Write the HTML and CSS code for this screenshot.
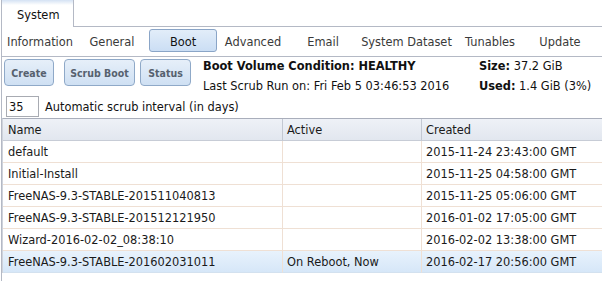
FILE: index.html
```html
<!DOCTYPE html>
<html lang="en">
  <head>
    <meta charset="UTF-8" />
    <meta name="viewport" content="width=device-width, initial-scale=1.0" />
    <title>System - Boot</title>
    <link rel="stylesheet" href="styles.css">
  </head>
  <body>
    <div class="page">
      <!-- Top tab -->
      <div class="tabbar">
        <div class="tab">System</div>
      </div>

      <!-- Sub navigation -->
      <div class="subnav">
        <a href="#" class="nav-item nav-first">Information</a>
        <a href="#" class="nav-item nav-first">General</a>
        <a href="#" class="nav-item active">Boot</a>
        <a href="#" class="nav-item">Advanced</a>
        <a href="#" class="nav-item">Email</a>
        <a href="#" class="nav-item nav-wide">System Dataset</a>
        <a href="#" class="nav-item">Tunables</a>
        <a href="#" class="nav-item">Update</a>
      </div>

      <!-- Boot panel -->
      <div class="content">
        <div class="toolbar">
          <div class="actions">
            <button class="btn btn-create">Create</button>
            <button class="btn btn-scrub">Scrub Boot</button>
            <button class="btn btn-status">Status</button>
          </div>
          <div class="status">
            <div class="status-main">
              <div><b>Boot Volume Condition: HEALTHY</b></div>
              <div>Last Scrub Run on: Fri Feb 5 03:46:53 2016</div>
            </div>
            <div class="status-size">
              <div><b>Size:</b> 37.2 GiB</div>
              <div><b>Used:</b> 1.4 GiB (3%)</div>
            </div>
          </div>
        </div>

        <div class="interval">
          <input class="interval-input" type="text" value="35">
          <label class="interval-label">Automatic scrub interval (in days)</label>
        </div>

        <table class="grid">
          <thead>
            <tr>
              <th class="col-name">Name</th>
              <th class="col-active">Active</th>
              <th class="col-created">Created</th>
            </tr>
          </thead>
          <tbody>
            <tr>
              <td>default</td>
              <td></td>
              <td>2015-11-24 23:43:00 GMT</td>
            </tr>
            <tr>
              <td>Initial-Install</td>
              <td></td>
              <td>2015-11-25 04:58:00 GMT</td>
            </tr>
            <tr>
              <td>FreeNAS-9.3-STABLE-201511040813</td>
              <td></td>
              <td>2015-11-25 05:06:00 GMT</td>
            </tr>
            <tr>
              <td>FreeNAS-9.3-STABLE-201512121950</td>
              <td></td>
              <td>2016-01-02 17:05:00 GMT</td>
            </tr>
            <tr>
              <td>Wizard-2016-02-02_08:38:10</td>
              <td></td>
              <td>2016-02-02 13:38:00 GMT</td>
            </tr>
            <tr class="selected">
              <td>FreeNAS-9.3-STABLE-201602031011</td>
              <td>On Reboot, Now</td>
              <td>2016-02-17 20:56:00 GMT</td>
            </tr>
          </tbody>
        </table>
      </div>
    </div>
  </body>
</html>
```

FILE: styles.css
```css
html,
body {
  overflow: hidden;
}

body {
  margin: 0;
  font-family: "DejaVu Sans", Verdana, sans-serif;
  font-size: 11.4px;
  color: #1a1a1a;
  background: #fff;
}

.page {
  margin-left: 1px;
  border-left: 1px solid #b4b9c5;
  min-height: 281px;
}

/* Tab bar */
.tabbar {
  display: flex;
  height: 26px;
  border-bottom: 1px solid #b4b9c5;
}

.tab {
  box-sizing: border-box;
  width: 72px;
  height: 27px;
  margin-bottom: -1px;
  padding: 3px 0 0 15px;
  line-height: 24px;
  border-right: 1px solid #b4b9c5;
  background: linear-gradient(#d4e2f4, #eef3fa 3px, #fff 5px);
  color: #111;
}

/* Sub navigation */
.subnav {
  display: flex;
  gap: 2px;
  height: 29px;
  padding-left: 3px;
  border-bottom: 1px solid #b4b9c5;
}

.nav-item {
  box-sizing: border-box;
  display: flex;
  justify-content: center;
  flex-shrink: 0;
  width: 68px;
  height: 23px;
  margin-top: 2px;
  padding-top: 1px;
  line-height: 22px;
  white-space: nowrap;
  color: #3a3a3a;
  text-decoration: none;
  border: 1px solid transparent;
  border-radius: 3px;
}

.nav-first {
  width: 70px;
}

.nav-wide {
  width: 95px;
}

.nav-item.active {
  color: #111;
  background: linear-gradient(#e2edf9, #cbdef4);
  border-color: #8aa5c7;
}

/* Toolbar */
.toolbar {
  display: flex;
}

.actions {
  display: flex;
  padding: 2px 0 0 2px;
  width: 199px;
}

.btn {
  box-sizing: border-box;
  height: 27px;
  padding: 0;
  font-family: "DejaVu Sans Condensed", "DejaVu Sans", sans-serif;
  font-stretch: condensed;
  font-size: 10.5px;
  font-weight: bold;
  color: #56616f;
  background: linear-gradient(#e6eff9, #cfe0f3);
  border: 1px solid #8fa9c8;
  border-radius: 4px;
}

.btn-create {
  width: 50px;
}

.btn-scrub {
  width: 71px;
  margin: 0 5px 0 10px;
}

.btn-status {
  width: 51px;
}

.status {
  display: flex;
  margin-top: -1px;
  line-height: 20px;
  color: #111;
}

.status-main {
  width: 276px;
}

/* Scrub interval */
.interval {
  display: flex;
  align-items: center;
  height: 21px;
  padding-left: 4px;
}

.interval-input {
  box-sizing: border-box;
  width: 33px;
  height: 21px;
  margin: 0;
  padding: 0 0 0 2px;
  font-family: inherit;
  font-size: inherit;
  color: #111;
  border: 1px solid #a8abb2;
  border-radius: 0;
}

.interval-label {
  margin-left: 6px;
  color: #111;
}

/* Boot environments grid */
.grid {
  table-layout: fixed;
  width: 601px;
  margin-top: 1px;
  border-spacing: 0;
  border-top: 1px solid #a9aebb;
  border-left: 1px solid #cfd3db;
}

.grid th,
.grid td {
  box-sizing: border-box;
  height: 22px;
  padding: 1px 0 0 4px;
  text-align: left;
  font-weight: normal;
  white-space: nowrap;
  overflow: hidden;
  line-height: 20px;
}

.grid th {
  background: linear-gradient(#eef1f7, #e2e7ef);
  border-right: 1px solid #c3c8d2;
  border-bottom: 1px solid #c7ccd6;
  color: #1a1a1a;
}

.grid td {
  border-right: 1px solid #efe0d4;
  border-bottom: 1px solid #efe0d4;
}

.grid th:first-child,
.grid td:first-child {
  padding-left: 5px;
}

.grid th:last-child,
.grid td:last-child {
  border-right: none;
}

.col-name {
  width: 280px;
}

.col-active {
  width: 139px;
}

.col-created {
  width: 181px;
}

.grid tr.selected td {
  background: linear-gradient(#e8f2fc, #d6e7f8);
  border-bottom-color: #d3e1ef;
}
```
